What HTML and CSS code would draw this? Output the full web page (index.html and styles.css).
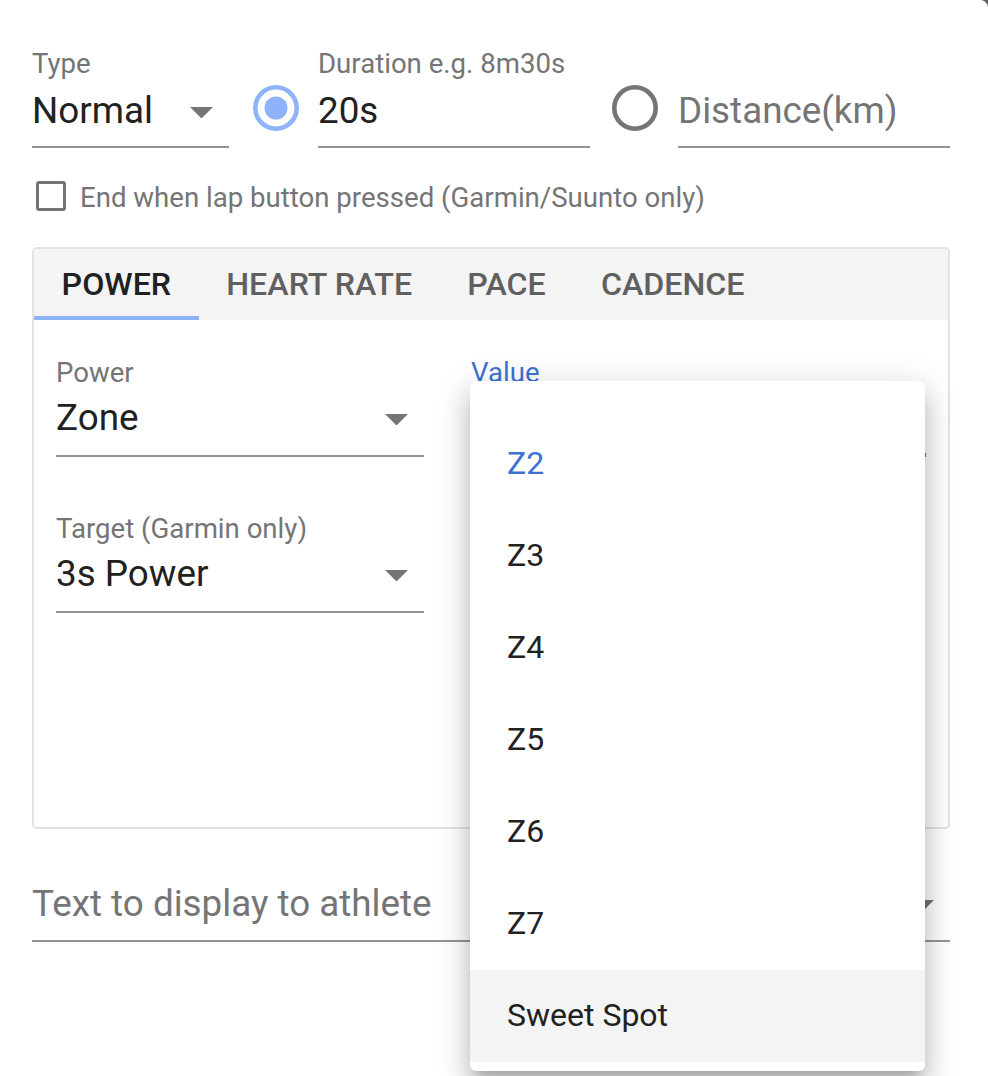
FILE: index.html
```html
<!DOCTYPE html>
<html>
<head>
<meta charset="utf-8">
<link rel="stylesheet" href="styles.css">
</head>
<body>
<div class="dialog">
  <div class="top-row">
    <div class="field type-field">
      <div class="label">Type</div>
      <div class="input">
        <span>Normal</span>
        <svg class="arrow" viewBox="7 10 10 5" width="23" height="11.5"><path d="M7 10l5 5 5-5z"/></svg>
      </div>
    </div>
    <svg class="radio radio-on" viewBox="2 2 20 20" width="46" height="46">
      <circle cx="12" cy="12" r="9" fill="none" stroke-width="2"/>
      <circle class="dot" cx="12" cy="12" r="5"/>
    </svg>
    <div class="field dur-field">
      <div class="label">Duration e.g. 8m30s</div>
      <div class="input"><span>20s</span></div>
    </div>
    <svg class="radio radio-off" viewBox="2 2 20 20" width="46" height="46">
      <circle cx="12" cy="12" r="9" fill="none" stroke-width="2"/>
    </svg>
    <div class="field dist-field">
      <div class="label">&nbsp;</div>
      <div class="input placeholder"><span>Distance(km)</span></div>
    </div>
  </div>

  <div class="lap-row">
    <span class="checkbox"></span>
    <span class="lap-label">End when lap button pressed (Garmin/Suunto only)</span>
  </div>

  <div class="panel">
    <div class="tabs">
      <div class="tab active">Power</div>
      <div class="tab">Heart Rate</div>
      <div class="tab">Pace</div>
      <div class="tab">Cadence</div>
    </div>
    <div class="panel-body">
      <div class="col-left">
        <div class="field">
          <div class="label">Power</div>
          <div class="input">
            <span>Zone</span>
            <svg class="arrow" viewBox="7 10 10 5" width="23" height="11.5"><path d="M7 10l5 5 5-5z"/></svg>
          </div>
        </div>
        <div class="field">
          <div class="label">Target (Garmin only)</div>
          <div class="input">
            <span>3s Power</span>
            <svg class="arrow" viewBox="7 10 10 5" width="23" height="11.5"><path d="M7 10l5 5 5-5z"/></svg>
          </div>
        </div>
      </div>
      <div class="col-right">
        <div class="field value-field">
          <div class="label focused">Value</div>
          <div class="input">
            <span>Z2</span>
            <svg class="arrow" viewBox="7 10 10 5" width="23" height="11.5"><path d="M7 10l5 5 5-5z"/></svg>
          </div>
        </div>
      </div>
    </div>
  </div>

  <div class="field text-field">
    <div class="input placeholder">
      <span>Text to display to athlete</span>
      <svg class="arrow" viewBox="7 10 10 5" width="23" height="11.5"><path d="M7 10l5 5 5-5z"/></svg>
    </div>
  </div>
</div>

<ul class="menu">
  <li class="item selected">Z2</li>
  <li class="item">Z3</li>
  <li class="item">Z4</li>
  <li class="item">Z5</li>
  <li class="item">Z6</li>
  <li class="item">Z7</li>
  <li class="item hover">Sweet Spot</li>
</ul>

<div class="corner"></div>
</body>
</html>
```

FILE: styles.css
```css
html, body {
  margin: 0;
  padding: 0;
  background: #ffffff;
}

body {
  font-family: Roboto, "Liberation Sans", sans-serif;
  width: 988px;
  height: 1076px;
  overflow: hidden;
  position: relative;
  color: #212121;
}

.dialog {
  padding: 48px 38px 0 32px;
}

.top-row {
  display: flex;
  align-items: flex-start;
}

.field {
  display: flex;
  flex-direction: column;
}

.label {
  font-size: 27.6px;
  line-height: 32px;
  height: 32px;
  color: #757575;
  white-space: nowrap;
}

.label.focused {
  color: #3d72d4;
}

.input {
  margin-top: 7px;
  height: 44px;
  font-size: 36.8px;
  line-height: 44px;
  padding-bottom: 15px;
  border-bottom: 2px solid #949494;
  display: flex;
  align-items: center;
  justify-content: space-between;
  color: #212121;
  white-space: nowrap;
}

.top-row .input {
  margin-top: 9px;
  padding-bottom: 13px;
}

.input.placeholder {
  color: #757575;
}

.arrow {
  fill: #757575;
  margin-right: 16px;
  margin-top: 3px;
  flex: none;
}

.type-field { width: 197px; }
.dur-field { width: 272px; margin-left: 19px; }
.dist-field { width: 272px; margin-left: 20px; }

.radio {
  flex: none;
  margin-top: 36.5px;
}

.radio-on { margin-left: 24px; }
.radio-on circle { stroke: #8fb3fb; }
.radio-on .dot { fill: #8fb3fb; stroke: none; }

.radio-off { margin-left: 22px; }
.radio-off circle { stroke: #757575; }

.lap-row {
  display: flex;
  align-items: center;
  height: 30px;
  margin-top: 33px;
}

.checkbox {
  box-sizing: border-box;
  width: 30px;
  height: 30px;
  margin-left: 4px;
  border: 3.5px solid #757575;
  border-radius: 3px;
  flex: none;
}

.lap-label {
  margin-left: 14px;
  font-size: 27.6px;
  line-height: 32px;
  padding-top: 3px;
  color: #757575;
  white-space: nowrap;
}

.panel {
  margin-top: 36px;
  box-sizing: border-box;
  height: 582px;
  border: 2px solid #e3e3e3;
  border-radius: 5px;
  overflow: hidden;
}

.tabs {
  display: flex;
  height: 71px;
  background: #f4f4f4;
}

.tab {
  padding: 0 27.6px;
  font-size: 32.2px;
  font-weight: 500;
  line-height: 71px;
  letter-spacing: 0;
  text-transform: uppercase;
  color: #606060;
  white-space: nowrap;
}

.tab.active {
  color: #212121;
  box-shadow: inset 0 -4px 0 #8fb3fb;
}

.panel-body {
  display: grid;
  grid-template-columns: 368px 455px;
  column-gap: 47px;
  padding: 37px 22px 0 22px;
}

.col-left {
  display: flex;
  flex-direction: column;
  gap: 56px;
}

.value-field .input {
  padding-bottom: 13px;
  border-bottom: 4px solid #3d72d4;
}

.text-field {
  margin-top: 53px;
}

.text-field .input {
  margin-top: 0;
  padding-bottom: 14px;
}

.menu {
  position: absolute;
  left: 470px;
  top: 381px;
  width: 455px;
  height: 690px;
  box-sizing: border-box;
  margin: 0;
  padding: 37px 0 9px 0;
  list-style: none;
  background: #ffffff;
  border-radius: 6px;
  box-shadow: 0 11px 11px -7px rgba(0,0,0,0.2),
              0 18px 23px 2px rgba(0,0,0,0.14),
              0 7px 32px 5px rgba(0,0,0,0.12);
}

.item {
  height: 92px;
  box-sizing: border-box;
  padding: 0 0 2px 37px;
  font-size: 32px;
  line-height: 90px;
  color: #212121;
}

.item.selected {
  color: #3d72d4;
}

.item.hover {
  background: #f4f4f4;
}

.corner {
  position: absolute;
  top: 0;
  right: 0;
  width: 8px;
  height: 8px;
  background: radial-gradient(circle at 0 100%, transparent 7.5px, #5c5c5c 8.5px);
}
```
